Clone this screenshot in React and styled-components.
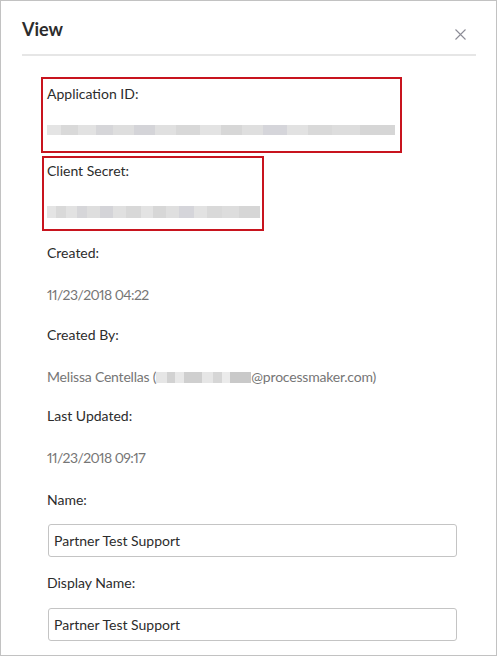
import React from "react";
import styled, { createGlobalStyle } from "styled-components";

const Global = createGlobalStyle`
  html, body { margin: 0; padding: 0; background: #fff; }
  body { font-family: Lato, "Liberation Sans", sans-serif; }
`;

const Frame = styled.div`
  box-sizing: border-box;
  width: 497px;
  height: 656px;
  border: 1px solid #c2c2c2;
  background: #fff;
  overflow: hidden;
`;

const Header = styled.div`
  display: flex;
  justify-content: space-between;
  align-items: flex-start;
  padding: 16px 30px 13px 21px;
`;

const Title = styled.h2`
  margin: 0;
  font-family: Lato, "Liberation Sans", sans-serif;
  font-weight: 700;
  font-size: 18px;
  line-height: 24px;
  color: #2c2c2c;
`;

const Close = styled.button`
  margin-top: 11px;
  width: 12px;
  height: 12px;
  padding: 0;
  border: 0;
  background: none;
  display: flex;
  align-items: center;
  justify-content: center;
  cursor: pointer;
`;

const Divider = styled.hr`
  margin: 0 20px 0 21px;
  border: 0;
  height: 2px;
  background: #e6e6e6;
`;

const Body = styled.div`
  padding: 21px 0 0 40px;
`;

const Highlight = styled.div`
  display: inline-block;
  border: 2px solid #c8141e;
  box-sizing: border-box;
  width: ${(p) => p.$w}px;
  margin-left: ${(p) => p.$ml || 0}px;
  margin-top: ${(p) => p.$mt || 0}px;
  padding: ${(p) => p.$pad};
`;

const Label = styled.div`
  font-size: 14px;
  line-height: 20px;
  color: #2c2c2c;
  margin-top: ${(p) => p.$mt || 0}px;
`;

const Value = styled.div`
  font-size: 14px;
  line-height: 20px;
  color: #767676;
  margin-top: 22px;
  font-variant-numeric: proportional-nums;
  letter-spacing: -0.2px;
`;

const DateValue = styled(Value)`
  letter-spacing: -0.6px;
`;

const Field = styled.div`
  padding-left: 6px;
  margin-top: ${(p) => p.$mt}px;
`;

const Blur = styled.div`
  width: ${(p) => p.$w}px;
  height: ${(p) => p.$h}px;
  margin-top: ${(p) => p.$mt}px;
  background: linear-gradient(
    90deg,
    #e4e4e4 0 4%,
    #d9d9d9 4% 9%,
    #e2e2e2 9% 14%,
    #d6d6d9 14% 19%,
    #dedede 19% 25%,
    #d4d4d8 25% 31%,
    #e0e0e0 31% 37%,
    #d8d8d8 37% 44%,
    #e3e3e3 44% 50%,
    #d7d7d7 50% 56%,
    #dfdfdf 56% 62%,
    #d5d5da 62% 69%,
    #e2e2e2 69% 75%,
    #d9d9d9 75% 82%,
    #dddddd 82% 90%,
    #d6d6d6 90% 100%
  );
  filter: blur(0.6px);
`;

const InlineBlur = styled.span`
  display: inline-block;
  width: 95px;
  height: 11px;
  vertical-align: -1px;
  background: linear-gradient(
    90deg,
    #e6e6e6 0 12%,
    #d2d2d2 12% 20%,
    #e8e8e8 20% 30%,
    #cfcfcf 30% 48%,
    #e6e6e6 48% 60%,
    #d6d6d6 60% 70%,
    #ebebeb 70% 78%,
    #c9c9c9 78% 100%
  );
  filter: blur(0.5px);
`;

const Input = styled.input`
  display: block;
  box-sizing: border-box;
  width: 409px;
  height: 33px;
  margin: ${(p) => p.$mt}px 0 0 1px;
  padding: 0 5px;
  border: 1px solid #c4c4c4;
  border-radius: 3px;
  font-family: Lato, "Liberation Sans", sans-serif;
  font-size: 14px;
  color: #2c2c2c;
  background: #fff;
  outline: none;
`;

export default function App() {
  return (
    <>
      <Global />
      <Frame>
        <Header>
          <Title>View</Title>
          <Close aria-label="Close">
            <svg width="11" height="11" viewBox="0 0 11 11">
              <path d="M0.5 0.5 L10.5 10.5 M10.5 0.5 L0.5 10.5" stroke="#8c8c96" strokeWidth="1.1" />
            </svg>
          </Close>
        </Header>
        <Divider />
        <Body>
          <Highlight $w={361} $pad="5px 4px 16px 4px">
            <Label>Application ID:</Label>
            <Blur $w={348} $h={10} $mt={21} />
          </Highlight>
          <br />
          <Highlight $w={222} $ml={1} $mt={3} $pad="3px 3px 11px 3px">
            <Label>Client Secret:</Label>
            <Blur $w={213} $h={12} $mt={25} />
          </Highlight>
          <Field $mt={12}>
            <Label>Created:</Label>
            <DateValue>11/23/2018 04:22</DateValue>
          </Field>
          <Field $mt={20}>
            <Label>Created By:</Label>
            <Value>
              Melissa Centellas (<InlineBlur />@processmaker.com)
            </Value>
          </Field>
          <Field $mt={19}>
            <Label>Last Updated:</Label>
            <DateValue>11/23/2018 09:17</DateValue>
          </Field>
          <Field $mt={22}>
            <Label>Name:</Label>
            <Input $mt={14} readOnly value="Partner Test Support" />
            <Label $mt={16}>Display Name:</Label>
            <Input $mt={15} readOnly value="Partner Test Support" />
          </Field>
        </Body>
      </Frame>
    </>
  );
}
